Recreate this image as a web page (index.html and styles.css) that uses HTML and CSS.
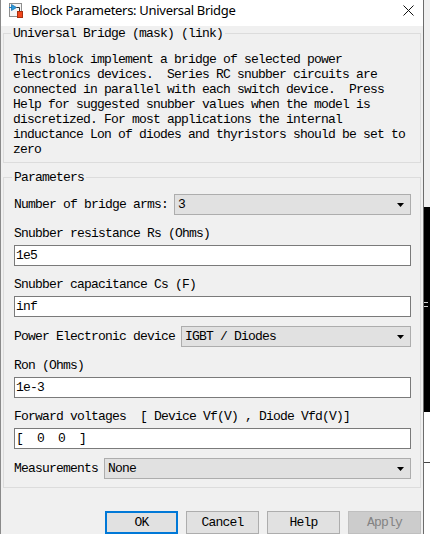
FILE: index.html
```html
<!DOCTYPE html>
<html>
<head>
<meta charset="utf-8">
<link rel="stylesheet" href="styles.css">
</head>
<body>
<div class="screen">
  <div class="window">
    <div class="titlebar">
      <svg class="app-icon" width="14" height="15" viewBox="0 0 14 15">
        <rect x="0.5" y="0.5" width="12" height="13" fill="#f6f6f6" stroke="#8e8e8e"/>
        <path d="M0 4.5 H3" stroke="#1c7fc4" stroke-width="1"/>
        <path d="M2.5 1.5 L7.5 4.5 L2.5 7.5 Z" fill="#2a9be0" stroke="#1c6fa8" stroke-width="0.8"/>
        <path d="M7.5 4.5 H10.5 V8" stroke="#333" stroke-width="1" fill="none"/>
        <rect x="8.5" y="8.5" width="5" height="6" fill="#f2461c" stroke="#a8300f"/>
      </svg>
      <span class="title">Block Parameters: Universal Bridge</span>
      <svg class="close" width="11" height="11" viewBox="0 0 11 11">
        <path d="M0.5 0.5 L10.5 10.5 M10.5 0.5 L0.5 10.5" stroke="#111" stroke-width="1"/>
      </svg>
    </div>
    <div class="content">
      <fieldset class="group desc">
        <legend>Universal Bridge (mask) (link)</legend>
        <p class="desc-text">This block implement a bridge of selected power
electronics devices.  Series RC snubber circuits are
connected in parallel with each switch device.  Press
Help for suggested snubber values when the model is
discretized. For most applications the internal
inductance Lon of diodes and thyristors should be set to
zero</p>
      </fieldset>
      <fieldset class="group params">
        <legend>Parameters</legend>
        <div class="row">
          <span class="lbl">Number of bridge arms:</span>
          <div class="combo"><span class="combo-val">3</span><svg class="arrow" width="7" height="4" viewBox="0 0 7 4"><path d="M0 0 H7 L3.5 4 Z" fill="#000"/></svg></div>
        </div>
        <div class="field-lbl">Snubber resistance Rs (Ohms)</div>
        <div class="edit">1e5</div>
        <div class="field-lbl">Snubber capacitance Cs (F)</div>
        <div class="edit">inf</div>
        <div class="row">
          <span class="lbl">Power Electronic device</span>
          <div class="combo"><span class="combo-val">IGBT / Diodes</span><svg class="arrow" width="7" height="4" viewBox="0 0 7 4"><path d="M0 0 H7 L3.5 4 Z" fill="#000"/></svg></div>
        </div>
        <div class="field-lbl">Ron (Ohms)</div>
        <div class="edit">1e-3</div>
        <div class="field-lbl">Forward voltages  [ Device Vf(V) , Diode Vfd(V)]</div>
        <div class="edit">[  0  0  ]</div>
        <div class="row">
          <span class="lbl">Measurements</span>
          <div class="combo"><span class="combo-val">None</span><svg class="arrow" width="7" height="4" viewBox="0 0 7 4"><path d="M0 0 H7 L3.5 4 Z" fill="#000"/></svg></div>
        </div>
      </fieldset>
      <div class="buttons">
        <div class="btn default">OK</div>
        <div class="btn">Cancel</div>
        <div class="btn">Help</div>
        <div class="btn disabled">Apply</div>
      </div>
    </div>
  </div>
  <div class="strip">
    <div class="strip-top"></div>
    <div class="strip-dark"><div class="grip"></div></div>
    <div class="strip-bottom"><div class="strip-line"></div></div>
  </div>
</div>
</body>
</html>
```
FILE: styles.css
```css
html, body {
  margin: 0;
  padding: 0;
  background: #ffffff;
}

.screen {
  display: flex;
  width: 430px;
  height: 534px;
  overflow: hidden;
}

.window {
  flex: none;
  width: 422px;
  border-left: 1px solid #8a8a8a;
  border-right: 1px solid #6c6c6c;
  background: #f0f0f0;
  display: flex;
  flex-direction: column;
}

.titlebar {
  flex: none;
  height: 26px;
  background: #ffffff;
  display: flex;
  align-items: flex-start;
  padding-left: 8px;
}

.app-icon {
  margin-top: 3px;
  flex: none;
}

.title {
  margin-left: 8px;
  font-family: "Noto Sans", "Open Sans", sans-serif;
  font-size: 13px;
  letter-spacing: -0.3px;
  line-height: 20px;
  color: #000;
  white-space: nowrap;
}

.close {
  flex: none;
  margin-left: auto;
  margin-right: 9px;
  margin-top: 5px;
}

.content {
  display: flex;
  flex-direction: column;
  font-family: "Liberation Mono", "DejaVu Sans Mono", monospace;
  font-size: 13px;
  letter-spacing: -0.8px;
  color: #000;
}

.group {
  margin: 0 2px;
  border: 1px solid #dcdcdc;
  min-width: 0;
}

.group legend {
  padding: 0 2px;
  margin-left: -2px;
  line-height: 15px;
  white-space: pre;
}

.desc {
  padding: 11px 9px 5px 9px;
}

.desc-text {
  margin: 0;
  line-height: 15px;
  white-space: pre;
}

.params {
  margin-top: 7px;
  padding: 9px 9px 8px 10px;
  display: flex;
  flex-direction: column;
}

.row {
  display: flex;
  align-items: center;
  height: 21px;
}

.row + .field-lbl,
.edit + .field-lbl {
  margin-top: 11px;
}

.edit + .row {
  margin-top: 9px;
}

.lbl {
  flex: none;
  line-height: 15px;
  white-space: pre;
  margin-right: 6px;
}

.field-lbl {
  line-height: 15px;
  white-space: pre;
}

.combo {
  flex: 1;
  height: 21px;
  box-sizing: border-box;
  border: 1px solid #adadad;
  background: #e1e1e1;
  display: flex;
  align-items: center;
  padding-left: 3px;
  padding-right: 6px;
}

.combo-val {
  flex: 1;
  white-space: pre;
  line-height: 15px;
}

.arrow {
  flex: none;
}

.edit {
  margin-top: 4px;
  height: 21px;
  box-sizing: border-box;
  border: 1px solid #7a7a7a;
  background: #ffffff;
  padding-left: 1px;
  line-height: 19px;
  white-space: pre;
}

.buttons {
  margin-top: 23px;
  display: flex;
  justify-content: flex-end;
  gap: 8px;
  padding-right: 2px;
}

.btn {
  width: 73px;
  height: 23px;
  box-sizing: border-box;
  border: 1px solid #adadad;
  background: #e1e1e1;
  display: flex;
  align-items: center;
  justify-content: center;
  line-height: 15px;
}

.btn.default {
  border: 2px solid #0078d7;
}

.btn.disabled {
  background: #cccccc;
  border-color: #bfbfbf;
  color: #838383;
}

.strip {
  flex: 1;
  display: flex;
  flex-direction: column;
}

.strip-top {
  height: 207px;
  background: #f0f0f0;
}

.strip-dark {
  height: 205px;
  background: #000000;
  display: flex;
  flex-direction: column;
}

.grip {
  margin-top: 95px;
  width: 4px;
  height: 3px;
  border-top: 1px solid #d0d0d0;
  border-bottom: 1px solid #d0d0d0;
}

.strip-bottom {
  flex: 1;
  background: #ffffff;
  display: flex;
  flex-direction: column;
}

.strip-line {
  margin-top: 50px;
  height: 1px;
  background: #444;
}
```
